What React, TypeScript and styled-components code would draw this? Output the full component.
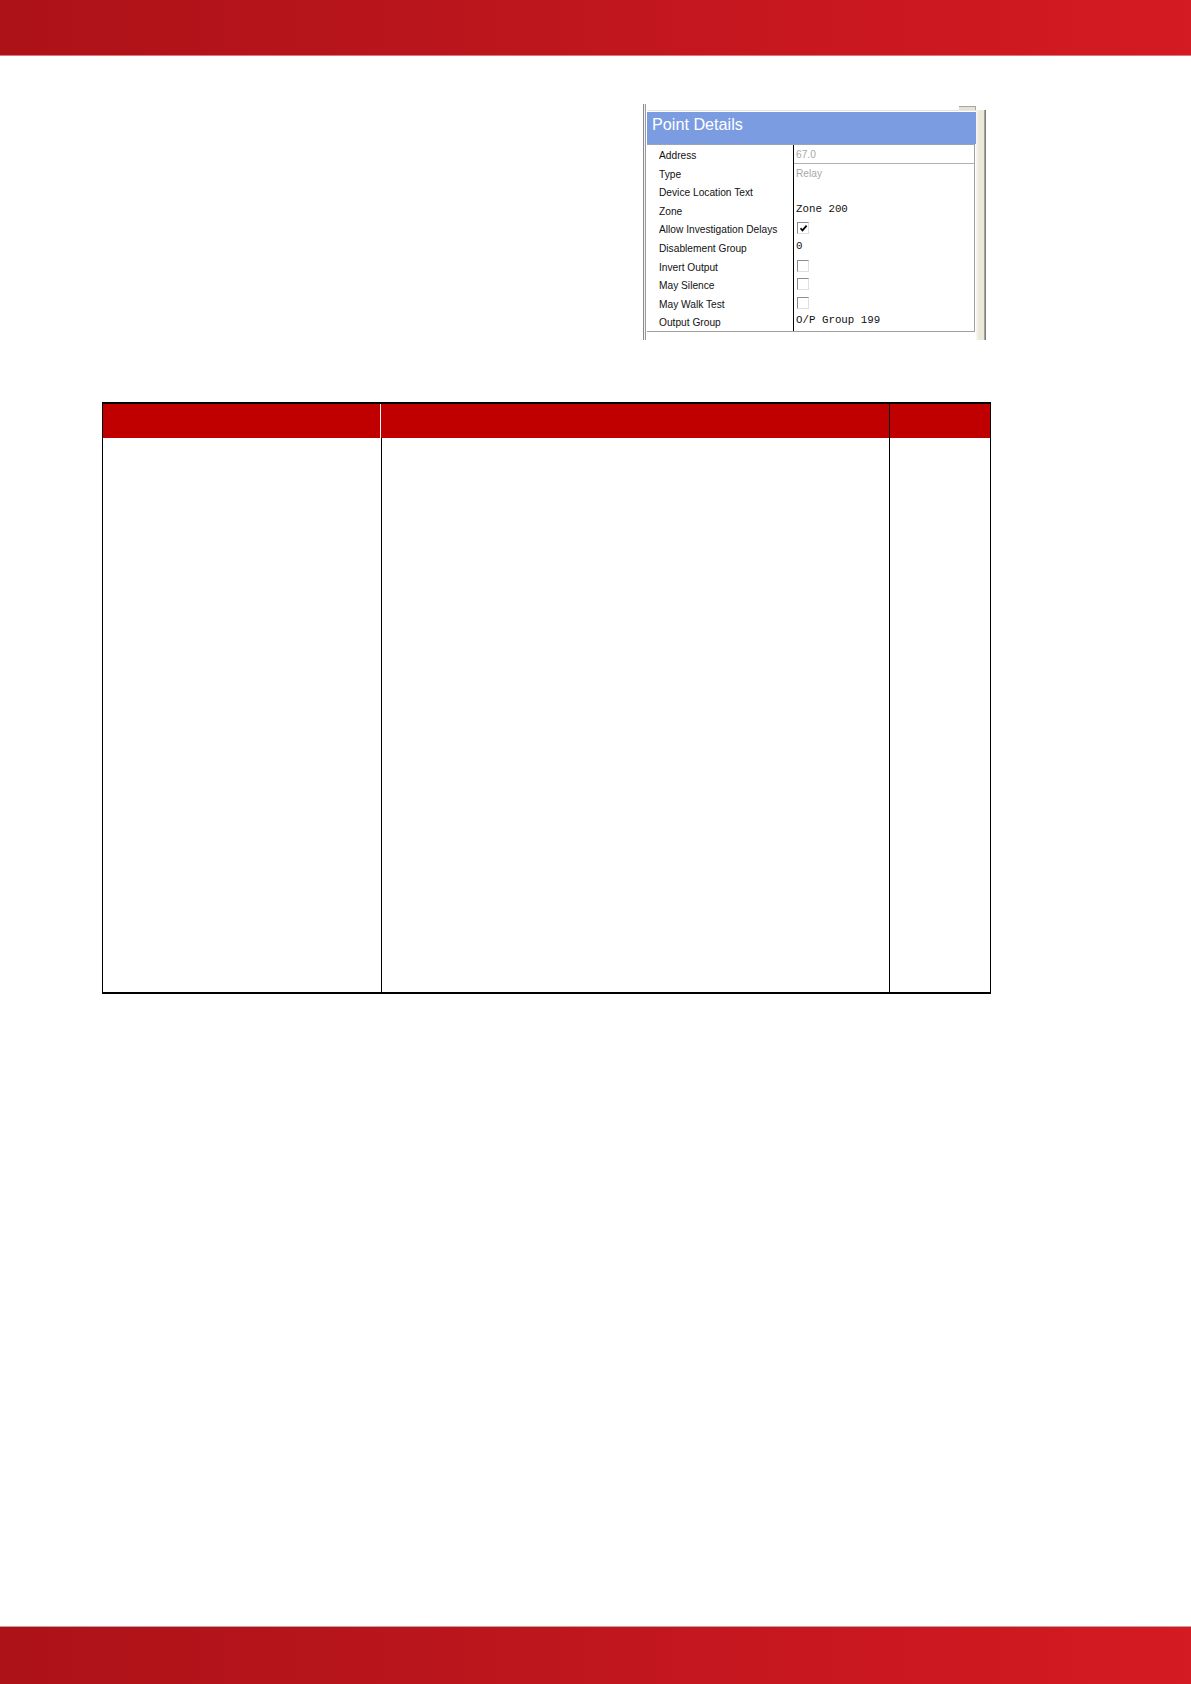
import React from "react";
import styled, { createGlobalStyle } from "styled-components";

const Global = createGlobalStyle`
  html, body { margin: 0; padding: 0; background: #ffffff; }
  body { font-family: "Liberation Sans", Arial, sans-serif; }
`;

const Page = styled.div`
  min-height: 100vh;
  display: flex;
  flex-direction: column;
  background: #ffffff;
`;

const Band = styled.div<{ $top?: boolean }>`
  height: ${(p) => (p.$top ? "55px" : "57px")};
  flex-shrink: 0;
  background: linear-gradient(90deg, #ad1218 0%, #b9151c 35%, #c7171f 65%, #d41a22 100%);
  ${(p) =>
    p.$top
      ? "border-bottom: 1px solid #e0767a;"
      : "border-top: 1px solid #c9a0a2;"}
`;

const Content = styled.main`
  flex: 1;
  display: flex;
  flex-direction: column;
  padding: 48px 0 0 102px;
`;

const PanelRow = styled.div`
  display: flex;
  padding-left: 541px;
`;

const Frame = styled.div`
  display: flex;
  width: 344px;
  height: 236px;
`;

const LeftEdge = styled.div`
  width: 4px;
  background: linear-gradient(90deg, #8a8a8a 0 1px, #f2f2f2 1px 2px, #9a9a9a 2px 3px, #ffffff 3px 4px);
`;

const RightEdge = styled.div`
  width: 11px;
  padding-top: 6px;
  display: flex;
  flex-direction: column;
`;

const RightStrip = styled.div`
  flex: 1;
  background: linear-gradient(90deg, #f4f4ee 0 2px, #ece9d8 2px 8px, #a4a49c 8px 9px, #7c7c7c 9px 10px, #ffffff 10px 11px);
`;

const PanelMain = styled.div`
  flex: 1;
  display: flex;
  flex-direction: column;
  padding-top: 6px;
  position: relative;
`;

const TopTab = styled.div`
  position: absolute;
  top: 2px;
  right: 0;
  width: 16px;
  height: 3px;
  border-top: 1px solid #a8a8a0;
  border-right: 1px solid #a8a8a0;
  background: #e4e2d8;
`;

const TopLine = styled.div`
  height: 2px;
  background: linear-gradient(180deg, #e6e6de 0 1px, #ffffff 1px 2px);
`;

const TitleBar = styled.div`
  height: 32px;
  background: #7b9ce0;
  color: #ffffff;
  font-family: "Liberation Sans", Arial, sans-serif;
  font-size: 16.2px;
  line-height: 1;
  padding: 4px 0 0 5px;
  box-sizing: border-box;
`;

const PropGrid = styled.div`
  display: grid;
  grid-template-columns: 147px 1fr;
  grid-auto-rows: 18.6px;
  border-top: 1px solid #9aa4b8;
  border-bottom: 1px solid #a0a0a0;
  margin-right: 1px;
  background: #ffffff;
`;

const PropLabel = styled.div`
  font-family: "Liberation Sans", Arial, sans-serif;
  font-size: 10.2px;
  color: #111111;
  padding: 5px 0 0 12px;
  white-space: nowrap;
  border-right: 1px solid #000000;
  box-sizing: border-box;
`;

const PropValue = styled.div<{ $mono?: boolean; $muted?: boolean; $lined?: boolean }>`
  display: flex;
  align-items: flex-start;
  padding: ${(p) => (p.$mono ? "2px" : "4px")} 0 0 2px;
  box-sizing: border-box;
  border-right: 1px solid #a0a0a0;
  ${(p) => (p.$lined ? "border-bottom: 1px solid #b0b0b0;" : "")}
  font-family: ${(p) =>
    p.$mono ? `"Liberation Mono", "DejaVu Sans Mono", monospace` : `"Liberation Sans", Arial, sans-serif`};
  font-size: ${(p) => (p.$mono ? "10.8px" : "10.2px")};
  color: ${(p) => (p.$muted ? "#a8a8a8" : "#111111")};
  white-space: nowrap;
`;

const Check = styled.span`
  display: inline-flex;
  align-items: center;
  justify-content: center;
  width: 12px;
  height: 12px;
  margin: 1px 0 0 1px;
  box-sizing: border-box;
  border-top: 1px solid #8c8c8c;
  border-left: 1px solid #8c8c8c;
  border-bottom: 1px solid #e0e0e0;
  border-right: 1px solid #e0e0e0;
  background: #ffffff;
`;

const Gap = styled.div`
  flex: 1;
`;

const Table = styled.div`
  margin-top: 62px;
  width: 889px;
  display: grid;
  grid-template-columns: 278px 508px 1fr;
  grid-template-rows: 34px 554px;
  border: 1px solid #000000;
  border-top-width: 2px;
  border-bottom-width: 2px;
  box-sizing: border-box;
`;

const HeadCell = styled.div<{ $first?: boolean; $last?: boolean }>`
  background: #c00000;
  ${(p) => (p.$first ? "border-right: 1px solid #ffffff;" : "")}
  ${(p) => (!p.$last ? "" : "border-left: 1px solid #000000;")}
`;

const BodyCell = styled.div<{ $divider?: boolean }>`
  background: #ffffff;
  ${(p) => (p.$divider ? "border-left: 1px solid #000000;" : "")}
`;

type Row = { label: string; value?: string; mono?: boolean; muted?: boolean; check?: boolean; checked?: boolean; lined?: boolean };

const rows: Row[] = [
  { label: "Address", value: "67.0", muted: true, lined: true },
  { label: "Type", value: "Relay", muted: true },
  { label: "Device Location Text" },
  { label: "Zone", value: "Zone 200", mono: true },
  { label: "Allow Investigation Delays", check: true, checked: true },
  { label: "Disablement Group", value: "0", mono: true },
  { label: "Invert Output", check: true },
  { label: "May Silence", check: true },
  { label: "May Walk Test", check: true },
  { label: "Output Group", value: "O/P Group 199", mono: true },
];

const Tick = () => (
  <svg width="9" height="9" viewBox="0 0 9 9">
    <path d="M1.5 4.2 L3.5 6.4 L7.6 1.6" fill="none" stroke="#000" strokeWidth="1.7" />
  </svg>
);

export default function App() {
  return (
    <Page>
      <Global />
      <Band $top />
      <Content>
        <PanelRow>
          <Frame>
            <LeftEdge />
            <PanelMain>
              <TopTab />
              <TopLine />
              <TitleBar>Point Details</TitleBar>
              <PropGrid>
                {rows.map((r) => (
                  <React.Fragment key={r.label}>
                    <PropLabel>{r.label}</PropLabel>
                    <PropValue $mono={r.mono || r.check} $muted={r.muted} $lined={r.lined}>
                      {r.check ? <Check>{r.checked ? <Tick /> : null}</Check> : r.value}
                    </PropValue>
                  </React.Fragment>
                ))}
              </PropGrid>
              <Gap />
            </PanelMain>
            <RightEdge>
              <RightStrip />
            </RightEdge>
          </Frame>
        </PanelRow>
        <Table>
          <HeadCell $first />
          <HeadCell />
          <HeadCell $last />
          <BodyCell />
          <BodyCell $divider />
          <BodyCell $divider />
        </Table>
      </Content>
      <Band />
    </Page>
  );
}
